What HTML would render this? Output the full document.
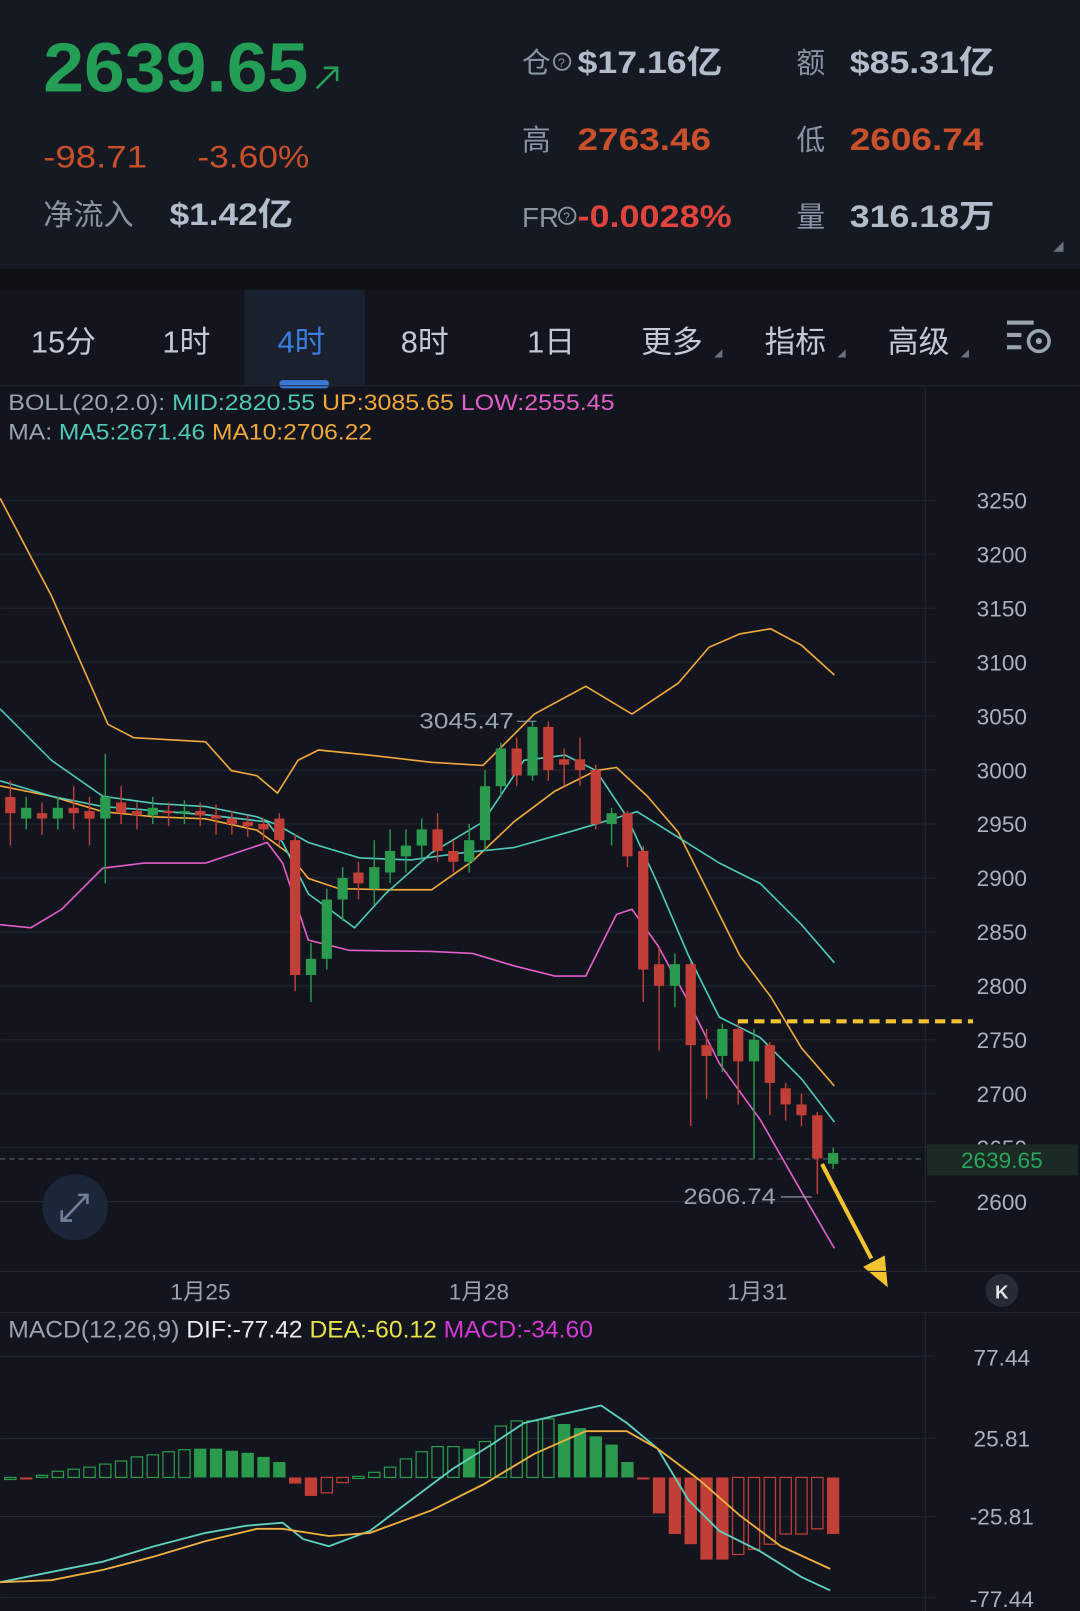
<!DOCTYPE html>
<html><head><meta charset="utf-8"><style>
html,body{margin:0;padding:0;background:#12151d;}
svg{display:block}
text{font-family:"Liberation Sans","Noto Sans CJK SC",sans-serif}
</style></head><body>
<svg id="s" width="1080" height="1611" viewBox="0 0 1051 1568" xmlns="http://www.w3.org/2000/svg">
<rect width="1051" height="1568" fill="#12151d"/>
<rect width="1051" height="262" fill="#151922"/>
<rect y="262" width="1051" height="20" fill="#0d1015"/>
<rect x="238" y="282" width="117" height="93" fill="#19212f"/>
<rect x="272" y="370" width="48" height="8" rx="3" fill="#3a78d8"/>
<line x1="0" y1="375.5" x2="1051" y2="375.5" stroke="#242a35"/>
<!-- header -->
<text x="42" y="89" font-size="68" font-weight="bold" fill="#239e57" textLength="258" lengthAdjust="spacingAndGlyphs">2639.65</text>
<path d="M308 86 L328 66 M315 66 H328 V79" stroke="#239e57" stroke-width="2.5" fill="none"/>
<text x="42" y="163" font-size="31" fill="#c9502a" textLength="101" lengthAdjust="spacingAndGlyphs">-98.71</text>
<text x="192" y="163" font-size="31" fill="#c9502a" textLength="109" lengthAdjust="spacingAndGlyphs">-3.60%</text>
<text x="42" y="219" font-size="29" fill="#8a93a3" textLength="88" lengthAdjust="spacingAndGlyphs">净流入</text>
<text x="165" y="219" font-size="31" font-weight="bold" fill="#b3bccb" textLength="120" lengthAdjust="spacingAndGlyphs">$1.42亿</text>
<text x="508" y="71" font-size="28" fill="#8a93a3">仓</text>
<circle cx="547" cy="60" r="8" fill="none" stroke="#8a93a3" stroke-width="1.8"/><text x="543" y="65" font-size="12" fill="#8a93a3">?</text>
<text x="562" y="71" font-size="31" font-weight="bold" fill="#b3bccb" textLength="141" lengthAdjust="spacingAndGlyphs">$17.16亿</text>
<text x="775" y="71" font-size="28" fill="#8a93a3">额</text>
<text x="827" y="71" font-size="31" font-weight="bold" fill="#b3bccb" textLength="141" lengthAdjust="spacingAndGlyphs">$85.31亿</text>
<text x="508" y="146" font-size="28" fill="#8a93a3">高</text>
<text x="562" y="146" font-size="31" font-weight="bold" fill="#c9502a" textLength="130" lengthAdjust="spacingAndGlyphs">2763.46</text>
<text x="775" y="146" font-size="28" fill="#8a93a3">低</text>
<text x="827" y="146" font-size="31" font-weight="bold" fill="#c9502a" textLength="130" lengthAdjust="spacingAndGlyphs">2606.74</text>
<text x="508" y="221" font-size="27" fill="#8a93a3">FR</text>
<circle cx="552" cy="210" r="8" fill="none" stroke="#8a93a3" stroke-width="1.8"/><text x="548" y="215" font-size="12" fill="#8a93a3">?</text>
<text x="562" y="221" font-size="31" font-weight="bold" fill="#e0443c" textLength="150" lengthAdjust="spacingAndGlyphs">-0.0028%</text>
<text x="775" y="221" font-size="28" fill="#8a93a3">量</text>
<text x="827" y="221" font-size="31" font-weight="bold" fill="#b3bccb" textLength="141" lengthAdjust="spacingAndGlyphs">316.18万</text>
<path d="M1035 235 V245 H1025 Z" fill="#6a7280"/>
<!-- tabs -->
<g font-size="30" fill="#c3cad5">
<text x="30" y="343">15分</text><text x="158" y="343">1时</text>
<text x="270" y="343" fill="#3b7de0">4时</text><text x="390" y="343">8时</text>
<text x="513" y="343">1日</text><text x="624" y="343">更多</text>
<text x="744" y="343">指标</text><text x="864" y="343">高级</text>
</g>
<path d="M703 340 V348 H695Z M823 340 V348 H815Z M943 340 V348 H935Z" fill="#6a7280"/>
<g fill="#9aa3b0"><rect x="980" y="312" width="26" height="4"/><rect x="980" y="324" width="14" height="4"/><rect x="980" y="336" width="14" height="4"/></g>
<circle cx="1011" cy="332" r="10" fill="none" stroke="#9aa3b0" stroke-width="3.5"/><circle cx="1011" cy="332" r="3" fill="#9aa3b0"/>
<!-- legends -->
<g font-size="22">
<text x="8" y="399" fill="#9aa3b0" textLength="590" lengthAdjust="spacingAndGlyphs">BOLL(20,2.0): <tspan fill="#4fc9b8">MID:2820.55</tspan> <tspan fill="#f0a83c">UP:3085.65</tspan> <tspan fill="#e05fc8">LOW:2555.45</tspan></text>
<text x="8" y="428" fill="#9aa3b0" textLength="354" lengthAdjust="spacingAndGlyphs">MA: <tspan fill="#4fc9b8">MA5:2671.46</tspan> <tspan fill="#f0a83c">MA10:2706.22</tspan></text>
</g>
<line x1="900.5" y1="376" x2="900.5" y2="1237" stroke="#232833"/>
<line x1="900.5" y1="1278" x2="900.5" y2="1568" stroke="#232833"/>
<g id="grid" stroke="#232833"></g>
<g id="ax" font-size="22" fill="#aab2bf" text-anchor="middle"></g>
<line x1="0" y1="1128" x2="900" y2="1128" stroke="#5a6270" stroke-dasharray="5,4"/>
<g id="lines" fill="none" stroke-width="1.6"></g>
<g id="cd"></g>
<text x="408" y="709" font-size="22" fill="#9aa3b0" textLength="92" lengthAdjust="spacingAndGlyphs">3045.47</text><line x1="503" y1="702" x2="522" y2="702" stroke="#9aa3b0"/>
<text x="665" y="1172" font-size="22" fill="#9aa3b0" textLength="90" lengthAdjust="spacingAndGlyphs">2606.74</text><line x1="760" y1="1165" x2="790" y2="1165" stroke="#9aa3b0"/>
<line x1="718" y1="994" x2="947" y2="994" stroke="#f2c230" stroke-width="4" stroke-dasharray="10,6"/>
<line x1="800" y1="1133" x2="848" y2="1225" stroke="#f2c230" stroke-width="4"/>
<path d="M840 1233 L864 1253 L861 1222 Z" fill="#f2c230"/>
<rect x="902" y="1114" width="147" height="30" fill="#1a2a25"/>
<text x="975" y="1137" font-size="22" fill="#29a55c" text-anchor="middle">2639.65</text>
<circle cx="73" cy="1175" r="32" fill="#1c2639"/>
<path d="M62 1187 L84 1164 M76 1163 H85 V1172 M60 1178 V1188 H70" stroke="#6f7f9a" stroke-width="2.5" fill="none"/>
<line x1="0" y1="1237.5" x2="1051" y2="1237.5" stroke="#232833"/>
<g font-size="22" fill="#9aa3b0" text-anchor="middle"><text x="195" y="1265">1月25</text><text x="466" y="1265">1月28</text><text x="737" y="1265">1月31</text></g>
<circle cx="975" cy="1256" r="16" fill="#262b35"/><text x="975" y="1264" font-size="18" fill="#e0e4ea" text-anchor="middle" font-weight="bold">K</text>
<line x1="0" y1="1277.5" x2="1051" y2="1277.5" stroke="#232833"/>
<text x="8" y="1302" font-size="23" fill="#9aa3b0" textLength="569" lengthAdjust="spacingAndGlyphs">MACD(12,26,9) <tspan fill="#e6e9ee">DIF:-77.42</tspan> <tspan fill="#e8e24a">DEA:-60.12</tspan> <tspan fill="#d43ad4">MACD:-34.60</tspan></text>
<g stroke="#232833"><line x1="0" y1="1320" x2="910" y2="1320"/><line x1="0" y1="1400" x2="910" y2="1400"/><line x1="0" y1="1476" x2="910" y2="1476"/><line x1="0" y1="1555" x2="910" y2="1555"/></g>
<g font-size="22" fill="#aab2bf" text-anchor="middle"><text x="975" y="1329">77.44</text><text x="975" y="1408">25.81</text><text x="975" y="1484">-25.81</text><text x="975" y="1564">-77.44</text></g>
<g id="mb"></g>
<polyline fill="none" stroke="#5fd0c0" stroke-width="1.8" points="0,1540 50,1530 100,1520 150,1505 200,1492 240,1485 275,1482 295,1498 320,1505 360,1490 400,1460 440,1430 480,1405 510,1385 540,1378 585,1368 610,1385 640,1410 670,1460 700,1490 740,1510 780,1535 808,1548"/>
<polyline fill="none" stroke="#f0b040" stroke-width="1.8" points="0,1540 50,1538 100,1528 150,1515 200,1500 250,1488 275,1488 320,1495 360,1492 420,1470 470,1445 520,1415 570,1393 610,1393 640,1410 680,1440 720,1475 760,1505 808,1527"/>
<script>
var NS="http://www.w3.org/2000/svg";
function el(p,t,a){var e=document.createElementNS(NS,t);for(var k in a)e.setAttribute(k,a[k]);document.getElementById(p).appendChild(e);return e;}
for(var p=3250;p>=2600;p-=50){var y=487+(3250-p)*1.05;el('grid','line',{x1:0,y1:y,x2:910,y2:y});var t=el('ax','text',{x:975,y:y+8});t.textContent=p;}
var L=[["#f0a83c","0,485 50,580 105,705 130,718 200,722 225,750 250,755 270,772 290,740 310,730 360,735 420,742 470,745 520,695 570,668 615,695 660,665 690,630 720,617 750,612 780,628 812,657"],
["#f0a83c","0,765 50,775 100,790 150,795 200,797 250,808 280,830 300,855 330,865 380,866 420,866 460,838 500,800 540,770 580,750 600,747 630,775 660,810 690,870 720,930 750,970 780,1020 812,1057"],
["#4fc9b8","0,690 50,740 100,775 150,782 200,785 250,795 270,803 300,820 350,835 400,837 450,830 500,825 560,808 620,790 660,815 700,840 740,860 780,900 812,937"],
["#4fc9b8","0,760 50,775 100,785 200,793 260,800 275,820 300,870 345,903 375,870 420,830 470,800 510,740 550,735 580,750 610,795 640,860 670,930 700,990 740,1010 780,1050 812,1092"],
["#e05fc8","0,900 30,903 60,885 100,845 140,840 200,840 260,820 275,840 300,915 340,925 420,926 460,928 500,940 540,950 570,950 600,890 615,885 640,920 670,975 700,1035 740,1090 780,1160 812,1215"]];
L.forEach(function(l){el('lines','polyline',{points:l[1],stroke:l[0]});});
function Y(p){return 487+(3250-p)*1.05;}
var C=[[2975,2960,2990,2930],[2955,2965,2975,2945],[2960,2955,2970,2940],[2955,2965,2975,2945],[2965,2960,2985,2945],[2962,2955,2975,2930],[2955,2975,3015,2895],[2970,2960,2985,2950],[2962,2958,2970,2945],[2958,2965,2975,2950],[2962,2960,2970,2948],[2960,2962,2972,2950],[2962,2958,2970,2948],[2958,2955,2968,2940],[2955,2950,2962,2940],[2952,2948,2958,2938],[2950,2945,2955,2935],
[2955,2935,2960,2930],[2935,2810,2940,2795],[2810,2825,2840,2785],[2825,2880,2890,2815],[2880,2900,2910,2860],[2905,2895,2915,2880],[2890,2910,2935,2875],[2905,2925,2945,2895],[2920,2930,2945,2905],[2930,2945,2955,2915],[2945,2925,2960,2915],[2925,2915,2935,2905],[2915,2935,2950,2905],[2935,2985,3000,2925],[2985,3020,3025,2975],[3020,2995,3030,2985],[2995,3040,3045,2990],[3040,3000,3045,2990],[3010,3005,3020,2985],[3010,3000,3030,2985],[3000,2950,3005,2945],[2950,2960,2965,2930],[2960,2920,2962,2910],[2925,2815,2930,2785],[2820,2800,2835,2740],[2800,2820,2830,2780],[2820,2745,2822,2670],[2745,2735,2760,2695],[2735,2760,2765,2720],[2760,2730,2765,2690],[2730,2750,2760,2640],[2745,2710,2748,2680],[2705,2690,2710,2675],[2690,2680,2700,2670],[2680,2640,2683,2607],[2635,2645,2650,2630]];
C.forEach(function(c,i){var x=10+i*15.4,g=c[1]>=c[0],col=g?"#2a9a4c":"#c23f38";
el('cd','line',{x1:x,x2:x,y1:Y(c[2]),y2:Y(c[3]),stroke:col,"stroke-width":1.4});
var t=Y(Math.max(c[0],c[1])),b=Y(Math.min(c[0],c[1]));el('cd','rect',{x:x-5,y:t,width:10,height:Math.max(2,b-t),fill:col});});
var H=[0,-1,2,6,8,10,13,16,20,22,25,27,28,28,26,24,20,15,-6,-18,-15,-5,1,5,10,18,25,30,30,28,35,50,55,55,57,52,48,40,32,15,-2,-35,-55,-65,-80,-80,-75,-70,-65,-55,-55,-50,-55,-50];
var F=[0,1,0,0,0,0,0,0,0,0,0,0,1,1,1,1,1,1,1,1,0,0,0,0,0,0,0,0,0,1,0,0,0,0,0,1,1,1,1,1,1,1,1,1,1,1,0,0,0,0,0,0,1,0];
H.forEach(function(h,i){if(i>52)return;var x=10+i*15.4,col=h>=0?"#2a9a4c":"#c23f38",y=h>=0?1438-h:1438,hh=Math.max(2,Math.abs(h));
if(F[i])el('mb','rect',{x:x-6,y:y,width:12,height:hh,fill:col});else el('mb','rect',{x:x-5.5,y:y,width:11,height:hh,fill:"none",stroke:col,"stroke-width":1.2});});
</script>
</svg>
</body></html>
